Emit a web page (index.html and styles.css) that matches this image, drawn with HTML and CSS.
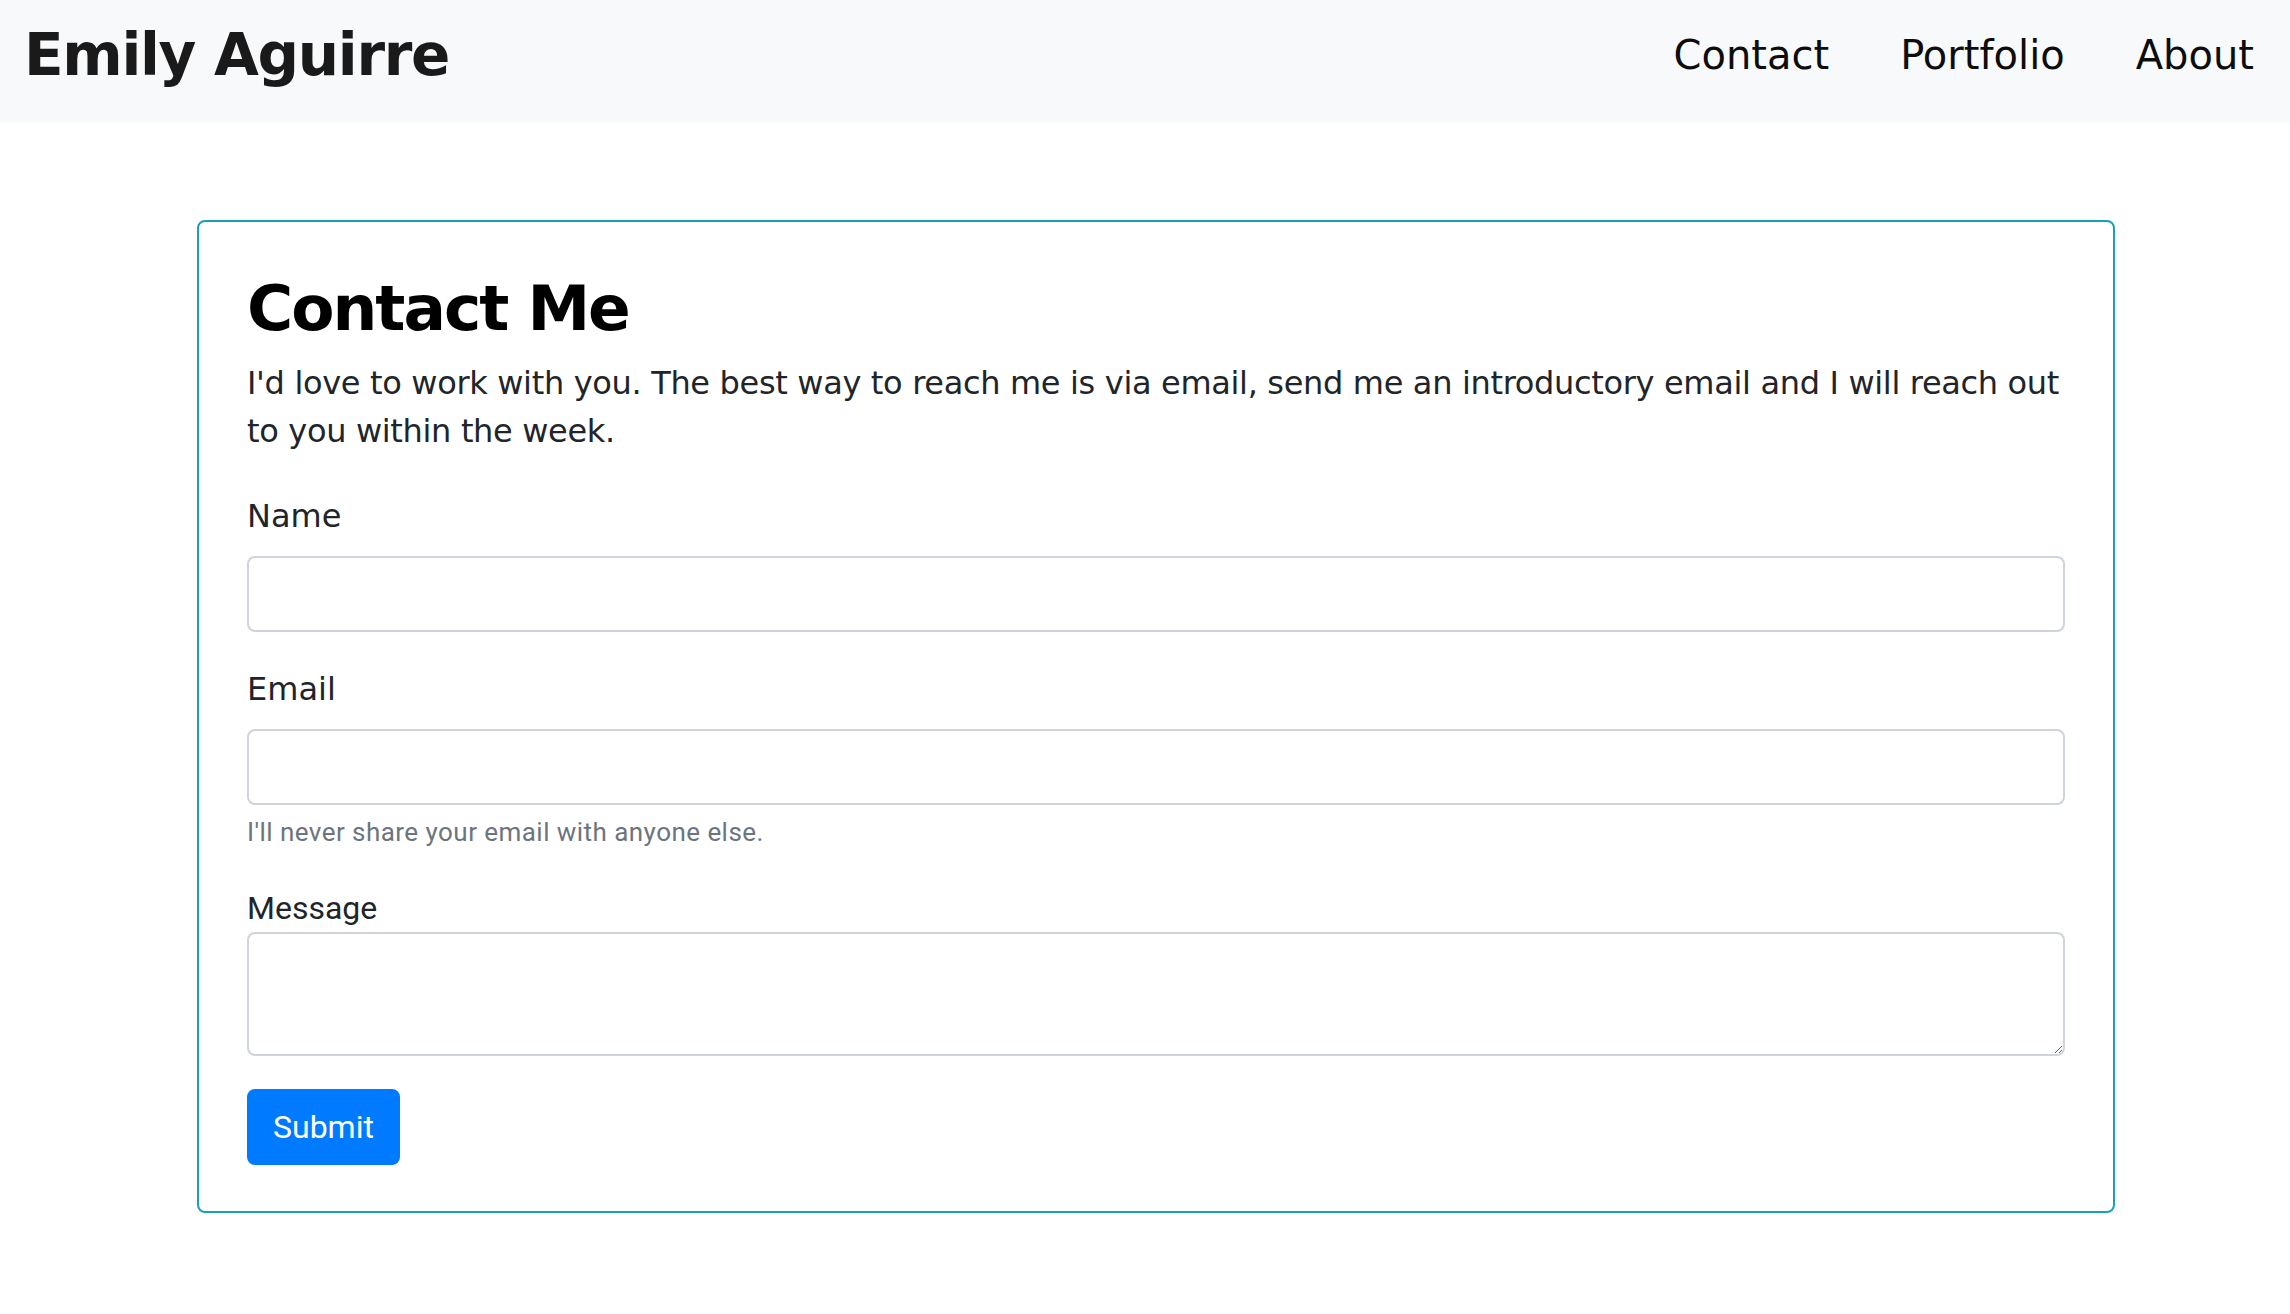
FILE: index.html
```html
<!DOCTYPE html>
<html lang="en">
<head>
<meta charset="utf-8">
<title>Emily Aguirre</title>
<link rel="stylesheet" href="styles.css">
</head>
<body>
  <nav class="navbar">
    <a class="brand" href="#">Emily Aguirre</a>
    <ul class="nav-list">
      <li><a class="nav-link" href="#">Contact</a></li>
      <li><a class="nav-link" href="#">Portfolio</a></li>
      <li><a class="nav-link" href="#">About</a></li>
    </ul>
  </nav>

  <main class="page">
    <section class="card">
      <h2 class="card-title">Contact Me</h2>
      <p class="intro">I'd love to work with you. The best way to reach me is via email, send me an introductory email and I will reach out to you within the week.</p>
      <form class="form">
        <div class="form-group">
          <label class="label" for="name">Name</label>
          <input class="control" id="name" type="text">
        </div>
        <div class="form-group">
          <label class="label" for="email">Email</label>
          <input class="control" id="email" type="email">
          <small class="help">I'll never share your email with anyone else.</small>
        </div>
        <div class="form-group">
          <label class="label-plain" for="message">Message</label>
          <textarea class="control textarea" id="message" rows="2"></textarea>
        </div>
        <button class="btn" type="button">Submit</button>
      </form>
    </section>
  </main>
</body>
</html>
```
FILE: styles.css
```css
* { box-sizing: border-box; }

html, body {
  margin: 0;
  padding: 0;
  background: #ffffff;
}

body {
  font-family: "DejaVu Sans", sans-serif;
  color: #212529;
}

/* ---------- navbar ---------- */
.navbar {
  display: flex;
  align-items: center;
  justify-content: space-between;
  height: 123px;
  padding: 0 36px 14px 24px;
  background: #f8f9fa;
}

.brand {
  font-family: "DejaVu Sans", sans-serif;
  font-weight: 700;
  font-size: 58px;
  line-height: 72px;
  letter-spacing: -1.3px;
  color: #1a1a1a;
  text-decoration: none;
}

.nav-list {
  display: flex;
  gap: 71px;
  margin: 0;
  padding: 0;
  list-style: none;
}

.nav-link {
  display: block;
  font-size: 40px;
  line-height: 60px;
  color: #0d0d0d;
  text-decoration: none;
}

/* ---------- main card ---------- */
.page {
  padding: 97px 175px 80px 197px;
}

.card {
  border: 2px solid #17a2b8;
  border-radius: 8px;
  padding: 48px 48px 46px;
}

.card-title {
  margin: 0 0 11px;
  font-size: 63px;
  line-height: 78px;
  font-weight: 700;
  letter-spacing: -2px;
  color: #000000;
}

.intro {
  margin: 0 0 37px;
  font-size: 32px;
  line-height: 48px;
  letter-spacing: -0.33px;
  color: #212529;
}

.form-group {
  display: flex;
  flex-direction: column;
  align-items: stretch;
  margin-bottom: 33px;
}

.label {
  display: block;
  margin-bottom: 16px;
  font-size: 32px;
  line-height: 48px;
  color: #212529;
}

.label-plain {
  display: block;
  margin: 0;
  font-family: Roboto, "Liberation Sans", sans-serif;
  font-size: 32px;
  line-height: 48px;
  color: #212529;
}

.control {
  display: block;
  width: 100%;
  height: 76px;
  padding: 12px 24px;
  font-family: Roboto, "Liberation Sans", sans-serif;
  font-size: 32px;
  line-height: 48px;
  color: #495057;
  background: #ffffff;
  border: 2px solid #ced4da;
  border-radius: 8px;
  outline: none;
}

.textarea {
  height: 124px;
  resize: vertical;
}

.help {
  display: block;
  margin-top: 8px;
  font-family: Roboto, "Liberation Sans", sans-serif;
  font-size: 26px;
  line-height: 38px;
  letter-spacing: 0.45px;
  color: #6c757d;
}

.btn {
  display: inline-block;
  height: 76px;
  padding: 0 24px;
  font-family: Roboto, "Liberation Sans", sans-serif;
  font-size: 32px;
  line-height: 72px;
  color: #ffffff;
  background: #007bff;
  border: 2px solid #007bff;
  border-radius: 8px;
  cursor: pointer;
}
```
